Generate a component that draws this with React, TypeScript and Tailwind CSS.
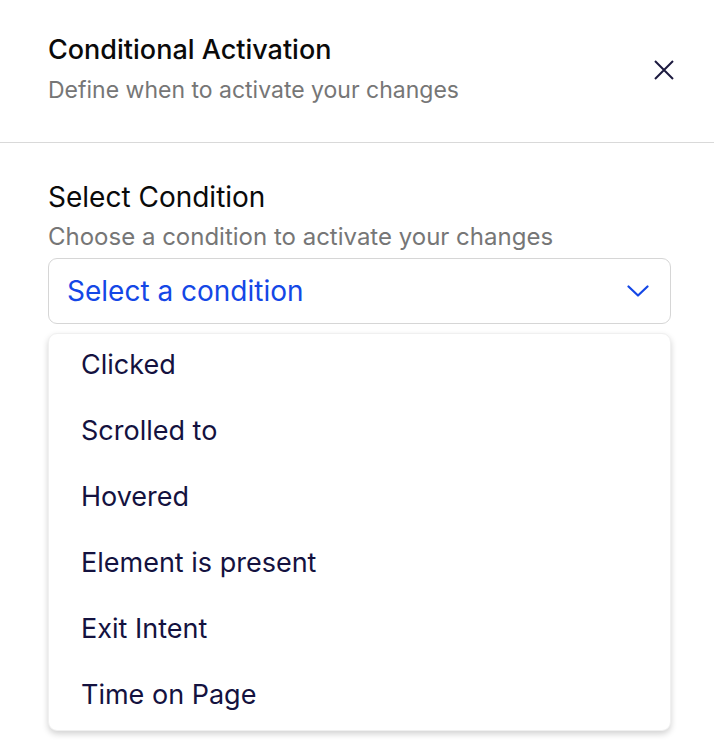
const conditions = [
  "Clicked",
  "Scrolled to",
  "Hovered",
  "Element is present",
  "Exit Intent",
  "Time on Page",
];

export default function App() {
  return (
    <div className="w-full min-h-screen bg-white font-['Inter',sans-serif]">
      {/* Header */}
      <div className="flex items-center justify-between pl-[48px] pr-[40px] pt-[32px] pb-[34px] border-b-[1.5px] border-[#d9d9d9]">
        <div className="flex flex-col gap-[4px]">
          <h1 className="text-[27px] leading-[36px] font-medium text-[#0a0a0a]">
            Conditional Activation
          </h1>
          <p className="text-[23px] leading-[36px] text-[#767676]">
            Define when to activate your changes
          </p>
        </div>
        <button className="w-[20px] h-[20px] flex items-center justify-center text-[#1c1a3f]">
          <svg width="20" height="20" viewBox="0 0 20 20" fill="none">
            <path d="M1 1L19 19M19 1L1 19" stroke="currentColor" strokeWidth="2" />
          </svg>
        </button>
      </div>

      {/* Body */}
      <div className="pl-[48px] pr-[43px] pt-[36px]">
        <label className="block text-[28px] leading-[36px] text-[#0a0a0a]">
          Select Condition
        </label>
        <p className="mt-[4px] text-[24px] leading-[36px] text-[#767676]">
          Choose a condition to activate your changes
        </p>
        <button className="mt-[3px] w-full h-[66px] flex items-center justify-between pl-[18px] pr-[21px] border-[1.5px] border-[#d6d6d6] rounded-[9px] bg-white">
          <span className="text-[28px] text-[#1447e6]">Select a condition</span>
          <svg width="22" height="12" viewBox="0 0 22 12" fill="none" className="text-[#1447e6]">
            <path d="M1.5 1.5L11 10.5L20.5 1.5" stroke="currentColor" strokeWidth="2.2" strokeLinecap="round" strokeLinejoin="round" />
          </svg>
        </button>

        {/* Options menu */}
        <ul className="mt-[9px] w-full rounded-[9px] bg-white border border-[#f0f0f0] shadow-[0_3px_6px_rgba(0,0,0,0.18)]">
          {conditions.map((c) => (
            <li
              key={c}
              className="h-[66px] flex items-center pb-[4px] px-[32px] text-[27px] text-[#14123f]"
            >
              {c}
            </li>
          ))}
        </ul>
      </div>
    </div>
  );
}
